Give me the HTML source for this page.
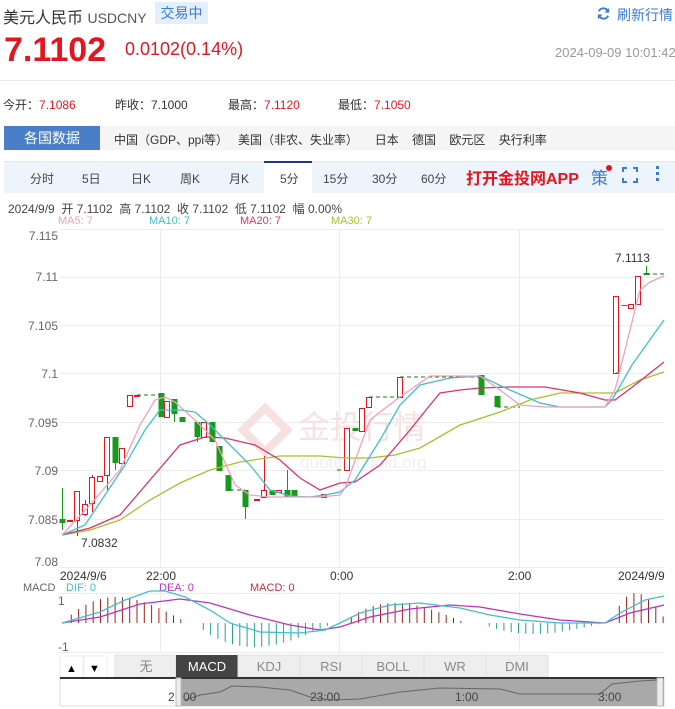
<!DOCTYPE html>
<html><head><meta charset="utf-8"><style>
*{margin:0;padding:0;box-sizing:border-box}
body{width:675px;height:709px;overflow:hidden;background:#fff;font-family:"Liberation Sans","Noto Sans CJK SC",sans-serif;color:#333;position:relative}
.a{position:absolute;white-space:nowrap}
.red{color:#e4151d}
</style></head><body>
<div class="a" style="left:3px;top:4px;font-size:16px;color:#333">美元人民币 <span style="font-size:14px;color:#555">USDCNY</span></div>
<div class="a" style="left:155px;top:2px;width:53px;height:22px;background:#e3effa;color:#3a7bd5;font-size:14px;line-height:22px;text-align:center">交易中</div>
<svg class="a" style="left:596px;top:6px" width="15" height="15" viewBox="0 0 16 16"><path d="M13 6A5.5 5.5 0 0 0 3 5.5M3 10a5.5 5.5 0 0 0 10 .5" fill="none" stroke="#3a7bd5" stroke-width="2"/><path d="M14 2v5h-5z M2 14v-5h5z" fill="#3a7bd5"/></svg>
<div class="a" style="left:617px;top:5px;font-size:14px;color:#3a7bd5">刷新行情</div>
<div class="a red" style="left:4px;top:31px;font-size:34px;font-weight:bold">7.1102</div>
<div class="a red" style="left:125px;top:39px;font-size:18px">0.0102(0.14%)</div>
<div class="a" style="left:555px;top:45px;font-size:13px;color:#999">2024-09-09 10:01:42</div>
<div class="a" style="left:0;top:80px;width:675px;height:1px;background:#e8e8e8"></div>
<div class="a" style="left:3px;top:96px;font-size:12px">今开：<span class="red">7.1086</span></div>
<div class="a" style="left:115px;top:96px;font-size:12px">昨收：7.1000</div>
<div class="a" style="left:228px;top:96px;font-size:12px">最高：<span class="red">7.1120</span></div>
<div class="a" style="left:338px;top:96px;font-size:12px">最低：<span class="red">7.1050</span></div>
<div class="a" style="left:4px;top:126px;width:671px;height:24px;background:#f5f5f5"></div>
<div class="a" style="left:4px;top:126px;width:96px;height:24px;background:#4a7fc8;color:#fff;font-size:14px;line-height:24px;text-align:center">各国数据</div>
<div class="a" style="left:114px;top:131px;font-size:12px">中国（GDP、ppi等）&nbsp;&nbsp;&nbsp;美国（非农、失业率）&nbsp;&nbsp;&nbsp;&nbsp;&nbsp;日本&nbsp;&nbsp;&nbsp;&nbsp;德国&nbsp;&nbsp;&nbsp;&nbsp;欧元区&nbsp;&nbsp;&nbsp;&nbsp;央行利率</div>
<div class="a" style="left:4px;top:161px;width:671px;height:32px;background:#eef4fb;border-top:1px solid #dde8f4"></div>
<div class="a" style="left:264px;top:161px;width:48px;height:32px;background:#fff;border-top:2px solid #1a3b8a"></div>
<div class="a" style="left:0;top:170px;font-size:12px;color:#444">
<span class="a" style="left:30px">分时</span><span class="a" style="left:82px">5日</span><span class="a" style="left:131px">日K</span><span class="a" style="left:180px">周K</span><span class="a" style="left:229px">月K</span><span class="a" style="left:280px">5分</span><span class="a" style="left:323px">15分</span><span class="a" style="left:372px">30分</span><span class="a" style="left:421px">60分</span></div>
<div class="a red" style="left:466px;top:165px;font-size:16px;font-weight:bold">打开金投网APP</div>
<div class="a" style="left:591px;top:164px;font-size:17px;color:#3a7bd5">策</div>
<div class="a" style="left:606px;top:165px;width:6px;height:6px;border-radius:3px;background:#e4151d"></div>
<svg class="a" style="left:622px;top:167px" width="16" height="16"><path d="M1 5V1h4M11 1h4v4M15 11v4h-4M5 15H1v-4" fill="none" stroke="#3a7bd5" stroke-width="2"/></svg>
<div class="a" style="left:656px;top:166px;width:3px;height:3px;background:#3a7bd5;box-shadow:0 6px #3a7bd5,0 12px #3a7bd5"></div>
<div class="a" style="left:8px;top:200px;font-size:12px;color:#444">2024/9/9 &nbsp;开 7.1102 &nbsp;高 7.1102 &nbsp;收 7.1102 &nbsp;低 7.1102 &nbsp;幅 0.00%</div>
<div class="a" style="left:58px;top:215px;font-size:11px;color:#f4a0b8">MA5: 7</div>
<div class="a" style="left:149px;top:215px;font-size:11px;color:#3ec0cf">MA10: 7</div>
<div class="a" style="left:240px;top:215px;font-size:11px;color:#e0306a">MA20: 7</div>
<div class="a" style="left:331px;top:215px;font-size:11px;color:#a8c030">MA30: 7</div>
<svg class="a" style="left:0;top:0" width="675" height="709" id="s">
<g stroke="#ececec" stroke-width="1">
<line x1="60" y1="229.5" x2="664" y2="229.5"/><line x1="60" y1="277.5" x2="664" y2="277.5"/><line x1="60" y1="325.5" x2="664" y2="325.5"/><line x1="60" y1="373.5" x2="664" y2="373.5"/><line x1="60" y1="422.5" x2="664" y2="422.5"/><line x1="60" y1="470.5" x2="664" y2="470.5"/><line x1="60" y1="519.5" x2="664" y2="519.5"/><line x1="60" y1="567.5" x2="664" y2="567.5"/>
<line x1="160.5" y1="229" x2="160.5" y2="567"/><line x1="339.5" y1="229" x2="339.5" y2="567"/><line x1="519.5" y1="229" x2="519.5" y2="567"/>
<line x1="160.5" y1="592" x2="160.5" y2="652"/><line x1="339.5" y1="592" x2="339.5" y2="652"/><line x1="519.5" y1="592" x2="519.5" y2="652"/>
<line x1="60" y1="593.5" x2="664" y2="593.5"/><line x1="60" y1="652.5" x2="664" y2="652.5"/>
</g>
<g font-size="12" fill="#666" text-anchor="end" font-family="Liberation Sans">
<text x="58" y="240">7.115</text><text x="58" y="281">7.11</text><text x="58" y="330">7.105</text><text x="58" y="378">7.1</text><text x="58" y="427">7.095</text><text x="58" y="475">7.09</text><text x="58" y="524">7.085</text><text x="58" y="566">7.08</text>
</g>
<path d="M265 408l22 22-22 22-22-22z" fill="none" stroke="#f6e0e0" stroke-width="8"/>
<text x="298" y="438" font-size="32" fill="#f6e2e2" font-family="Noto Sans CJK SC">金投行情</text>
<text x="300" y="468" font-size="17" fill="#f0f0f0" font-family="Liberation Sans">quote.cngold.org</text>
<g id="cd"></g>
<g fill="none" stroke-width="1.3">
<polyline stroke="#a8c030" points="62,535 90,530 120,520 150,500 180,483 210,470 240,462 280,456 320,456 345,458 370,458 395,455 420,448 460,425 500,412 530,400 560,393 600,393 615,393 640,380 664,372"/>
<polyline stroke="#e0306a" points="62,535 90,528 120,515 150,480 180,445 205,437 225,438 255,445 280,460 300,478 320,490 340,483 355,482 380,465 410,430 430,405 440,393 460,390 480,388 510,387 545,387 580,393 605,400 615,400 635,385 664,362"/>
<polyline stroke="#3ec0cf" points="62,535 85,525 105,495 125,465 145,430 160,410 180,410 195,412 210,425 225,440 250,465 270,490 290,496 310,497 325,495 340,492 355,480 380,440 400,405 420,385 450,378 480,376 510,390 540,403 560,407 605,407 612,400 632,365 664,320"/>
<polyline stroke="#f4a0b8" points="62,535 90,505 120,470 140,425 155,400 165,397 175,402 195,420 215,440 235,485 250,495 270,497 300,497 320,497 340,495 345,488 370,420 380,412 400,397 430,376 480,376 500,390 520,405 545,407 605,407 615,390 640,290 650,282 664,276"/>
</g>
<text x="81" y="547" font-size="12" fill="#333">7.0832</text>
<text x="615" y="262" font-size="12" fill="#333">7.1113</text>
<g font-size="12" fill="#333"><text x="60" y="580">2024/9/6</text><text x="146" y="580">22:00</text><text x="330" y="580">0:00</text><text x="508" y="580">2:00</text><text x="618" y="580">2024/9/9</text></g>
<g font-size="11"><text x="23" y="591" fill="#666">MACD</text><text x="66" y="591" fill="#3ec0cf">DIF: 0</text><text x="159" y="591" fill="#c030c0">DEA: 0</text><text x="250" y="591" fill="#c0303a">MACD: 0</text></g>
<g font-size="12" fill="#666"><text x="58" y="605">1</text><text x="58" y="651">-1</text></g>
<g id="hist"></g>
<polyline fill="none" stroke="#c030c0" stroke-width="1.3" points="62,623 100,617 140,604 180,599 210,603 250,615 290,625 320,630 340,627 370,617 410,609 450,605 480,607 520,614 560,620 605,623 630,613 664,605"/>
<polyline fill="none" stroke="#3ec0cf" stroke-width="1.3" points="62,623 100,612 125,600 150,591 165,591 185,597 210,610 230,623 260,632 300,633 325,630 340,623 360,613 390,605 420,603 460,608 490,615 520,620 560,623 605,623 620,613 645,600 664,596"/>
<rect x="60" y="656" width="23" height="22" fill="#fff" stroke="#eee"/><rect x="84" y="656" width="23" height="22" fill="#fff" stroke="#eee"/>
<text x="66" y="672" font-size="11">▲</text><text x="89" y="672" font-size="11">▼</text>
<g font-size="13" fill="#888" text-anchor="middle" font-family="Liberation Sans">
<rect x="115" y="655" width="61" height="22" fill="#eee" stroke="#e0e0e0"/><text x="146" y="671" font-family="Noto Sans CJK SC">无</text>
<rect x="176" y="655" width="62" height="22" fill="#444"/><text x="207" y="671" fill="#fff">MACD</text>
<rect x="238" y="655" width="62" height="22" fill="#eee" stroke="#e0e0e0"/><text x="269" y="671">KDJ</text>
<rect x="300" y="655" width="62" height="22" fill="#eee" stroke="#e0e0e0"/><text x="331" y="671">RSI</text>
<rect x="362" y="655" width="62" height="22" fill="#eee" stroke="#e0e0e0"/><text x="393" y="671">BOLL</text>
<rect x="424" y="655" width="62" height="22" fill="#eee" stroke="#e0e0e0"/><text x="455" y="671">WR</text>
<rect x="486" y="655" width="62" height="22" fill="#eee" stroke="#e0e0e0"/><text x="517" y="671">DMI</text>
</g>
<rect x="60" y="678" width="604" height="28" fill="#fff" stroke="#ddd"/>
<rect x="178" y="678" width="486" height="28" fill="#a9a9a9"/>
<rect x="60" y="677" width="604" height="2" fill="#333"/>
<rect x="176" y="678" width="5" height="28" fill="#eee" stroke="#bbb"/><rect x="657" y="678" width="6" height="28" fill="#eee" stroke="#bbb"/>
<polyline fill="none" stroke="#666" points="185,700 200,695 220,692 232,686 260,687 290,690 310,697 330,700 360,699 400,692 440,688 500,689 520,694 600,694 612,684 640,681 657,680"/>
<g font-size="12" fill="#444"><text x="168" y="701">2</text><text x="183" y="701">00</text><text x="310" y="701">23:00</text><text x="455" y="701">1:00</text><text x="598" y="701">3:00</text></g>
</svg>
<script>
var NS="http://www.w3.org/2000/svg";
function el(p,t,a){var e=document.createElementNS(NS,t);for(var k in a)e.setAttribute(k,a[k]);p.appendChild(e);return e}
var cd=document.getElementById('cd');
var C=[[62,519,523,'g',488,530],[70,520,521,'r'],[77,491,520,'r',491,536],[85,504,514,'r',500,516],[92,477,503,'r',475,512],[100,476,481,'r'],[107,437,475,'r',437,490],[115,437,463,'g',437,470],[122,448,463,'r'],[130,395,406,'r'],[137,395,396,'r'],[161,393,417,'g'],[167,401,417,'r'],[174,399,414,'g',399,422],[182,417,422,'g'],[197,422,437,'g',422,442],[204,422,437,'r'],[212,422,442,'g'],[219,446,471,'g'],[228,475,491,'g'],[245,490,507,'g',490,519],[257,499,500,'r'],[264,490,497,'r',456,497],[272,490,495,'g'],[279,490,492,'r'],[287,490,497,'g',470,497],[294,490,497,'g'],[324,494,497,'r'],[347,428,470,'r'],[355,428,431,'g'],[362,408,431,'r'],[369,397,407,'r'],[400,377,397,'r'],[481,375,395,'g'],[497,396,407,'g'],[616,296,373,'r'],[624,305,306,'g'],[631,304,308,'r'],[638,276,304,'r'],[646,273,275,'g',266,275]];
C.forEach(function(c){var col=c[3]=='r'?'#e4151d':'#1a9a1a';
if(c[4]!==undefined)el(cd,'line',{x1:c[0]+.5,x2:c[0]+.5,y1:c[4],y2:c[5],stroke:col});
var h=Math.max(1,c[2]-c[1]);
if(c[3]=='r')el(cd,'rect',{x:c[0]-2.5,y:c[1]+.5,width:5,height:h,fill:'#fff',stroke:col});
else el(cd,'rect',{x:c[0]-2.5,y:c[1],width:6,height:h,fill:col});});
var dashes=[[137,160,395],[230,245,490],[294,325,497],[337,345,470],[369,400,397],[400,480,377],[497,520,407],[616,622,373],[646,664,274]];
dashes.forEach(function(d){el(cd,'line',{x1:d[0],x2:d[1],y1:d[2],y2:d[2],stroke:'#1a7a1a','stroke-dasharray':'4,3'})});
var hg=document.getElementById('hist');
function seg(a,b,peak,up){for(var x=a;x<=b;x+=7.3){var t=(x-a)/(b-a);var h=peak*Math.sin(Math.PI*Math.pow(t,0.8));
if(up)el(hg,'line',{x1:x,x2:x,y1:623,y2:623-h,stroke:'#a02020'});else el(hg,'line',{x1:x,x2:x,y1:623,y2:623+h,stroke:'#2aa090'});}}
seg(64,188,26,true);seg(196,334,24,false);seg(344,466,20,true);seg(482,604,11,false);seg(612,668,30,true);
</script>
</body></html>
